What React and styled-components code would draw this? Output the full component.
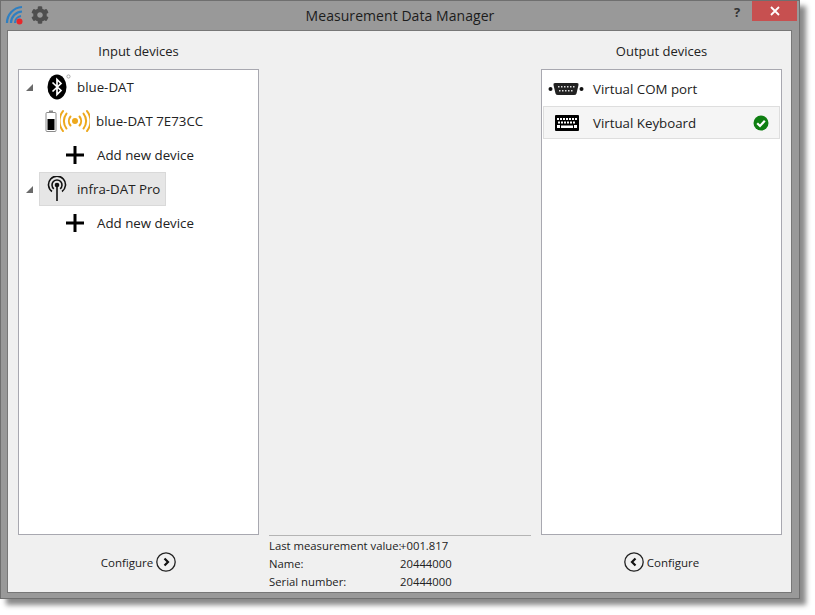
import React from 'react';
import styled, { createGlobalStyle } from 'styled-components';
import { FaCog } from 'react-icons/fa';

const Global = createGlobalStyle`
  html, body { margin: 0; background: #fff; }
  body { font-family: "Open Sans", "Noto Sans", sans-serif; color: #222; }
`;

const Page = styled.div`
  width: 815px;
  height: 615px;
  overflow: hidden;
`;
const Win = styled.div`
  width: 800px;
  height: 599px;
  box-sizing: border-box;
  background: #999999;
  border: 1px solid #6f6f6f;
  box-shadow: 6px 6px 5px #8a8a8a;
  display: flex;
  flex-direction: column;
`;
const TitleBar = styled.div`
  height: 29px;
  flex: none;
  display: grid;
  grid-template-columns: 1fr auto 1fr;
  align-items: start;
`;
const TitleLeft = styled.div`
  display: flex;
  align-items: center;
  gap: 4px;
  padding: 3px 0 0 4px;
  color: #4f4f4f;
`;
const Title = styled.div`
  font-size: 14px;
  line-height: 29px;
  letter-spacing: 0.06px;
  color: #1c1c1c;
`;
const TitleRight = styled.div`
  display: flex;
  justify-content: flex-end;
  padding-right: 2px;
`;
const Help = styled.div`
  width: 30px;
  font-size: 13px;
  font-weight: 700;
  line-height: 22px;
  text-align: center;
  color: #333;
`;
const Close = styled.div`
  width: 45px;
  height: 20px;
  background: #c75050;
  display: flex;
  align-items: center;
  justify-content: center;
`;
const Client = styled.div`
  flex: 1;
  margin: 0 7px 5px 6px;
  box-sizing: border-box;
  background: #f0f0f0;
  border: 1px solid #777;
  padding: 0 9px 0 10px;
  display: grid;
  grid-template-columns: 241px 1fr 241px;
  grid-template-rows: 38px 466px 1fr;
  column-gap: 10px;
`;
const Heading = styled.div`
  font-size: 13px;
  line-height: 40px;
  text-align: center;
  color: #222;
`;
const Panel = styled.div`
  background: #fff;
  border: 1px solid #a8a8b0;
  box-sizing: border-box;
  padding: 0 1px;
`;
const TreeRow = styled.div`
  height: 34px;
  display: flex;
  align-items: center;
  padding-left: ${p => p.$indent}px;
  font-size: 13.3px;
  color: #222;
`;
const Arrow = styled.svg`
  width: 7px;
  height: 7px;
  margin: 0 6px 0 0;
  flex: none;
`;
const Item = styled.div`
  display: flex;
  align-items: center;
  height: 34px;
  box-sizing: border-box;
  padding-right: 5px;
  background: ${p => (p.$selected ? '#e6e6e6' : 'transparent')};
  border: 1px solid ${p => (p.$selected ? '#d9d9d9' : 'transparent')};
`;
const IconSlot = styled.div`
  width: ${p => p.$w}px;
  margin-right: ${p => p.$gap || 0}px;
  flex: none;
  display: flex;
  align-items: center;
  justify-content: center;
`;
const OutRow = styled.div`
  height: ${p => (p.$selected ? '33px' : '34px')};
  display: flex;
  align-items: center;
  box-sizing: border-box;
  font-size: 13.3px;
  color: #222;
  background: ${p => (p.$selected ? '#f5f5f5' : 'transparent')};
  border: 1px solid ${p => (p.$selected ? '#dedede' : 'transparent')};
  padding-right: 10px;
  margin-top: ${p => (p.$selected ? '0' : '2px')};
`;
const OutLabel = styled.span`
  flex: 1;
`;
const ConfigureWrap = styled.div`
  display: flex;
  align-items: center;
  justify-content: center;
  gap: 3px;
  font-size: 11.5px;
  color: #222;
  padding-top: 4px;
  height: 46px;
`;
const Info = styled.div`
  border-top: 1px solid #b4b4b4;
  padding-top: 1px;
  font-size: 11.3px;
  line-height: 18px;
  color: #222;
`;
const InfoRow = styled.div`
  display: grid;
  grid-template-columns: 131px 1fr;
  white-space: nowrap;
`;

const SignalIcon = () => (
  <svg width="22" height="22" viewBox="0 0 22 22">
    <g fill="none" stroke="#2f7fc1" strokeWidth="2.2">
      <path d="M2 19 A16 16 0 0 1 17 3" />
      <path d="M6 19 A11.5 11.5 0 0 1 17 7.5" />
      <path d="M10 19 A7 7 0 0 1 16 12" />
    </g>
    <circle cx="14.5" cy="17.5" r="3" fill="#e8262a" />
  </svg>
);

const BluetoothIcon = () => (
  <svg width="24" height="26" viewBox="0 0 24 26">
    <ellipse cx="10" cy="13" rx="9.5" ry="12.5" fill="#000" />
    <path d="M5.5 8.5 L14 16.5 L10 20.5 V5.5 L14 9.5 L5.5 17.5" fill="none" stroke="#fff" strokeWidth="1.7" />
    <circle cx="21.5" cy="2.5" r="1.6" fill="none" stroke="#999" strokeWidth="0.8" />
  </svg>
);

const BatteryIcon = () => (
  <svg width="12" height="22" viewBox="0 0 12 22">
    <rect x="4" y="0.5" width="4" height="2" fill="#8a8a8a" />
    <rect x="1" y="2.5" width="10" height="19" rx="1" fill="#fff" stroke="#8a8a8a" />
    <rect x="2.5" y="9" width="7" height="11" fill="#000" />
  </svg>
);

const BroadcastIcon = () => (
  <svg width="30" height="24" viewBox="0 0 30 24">
    <circle cx="15" cy="12" r="3" fill="#eda81c" />
    <g fill="none" stroke="#eda81c" strokeWidth="2" strokeLinecap="round">
      <path d="M10.5 7.5 A7 7 0 0 0 10.5 16.5" />
      <path d="M19.5 7.5 A7 7 0 0 1 19.5 16.5" />
      <path d="M6.5 4.5 A12 12 0 0 0 6.5 19.5" />
      <path d="M23.5 4.5 A12 12 0 0 1 23.5 19.5" />
      <path d="M3 2 A16 16 0 0 0 3 22" />
      <path d="M27 2 A16 16 0 0 1 27 22" />
    </g>
  </svg>
);

const PlusIcon = () => (
  <svg width="18" height="18" viewBox="0 0 18 18">
    <path d="M7.5 0 H10.5 V7.5 H18 V10.5 H10.5 V18 H7.5 V10.5 H0 V7.5 H7.5 Z" fill="#000" />
  </svg>
);

const AntennaIcon = () => (
  <svg width="20" height="26" viewBox="0 0 20 26">
    <g fill="none" stroke="#111" strokeWidth="1.6">
      <path d="M5 15.5 A8.5 8.5 0 1 1 15 15.5" />
      <path d="M6.8 12.8 A5 5 0 1 1 13.2 12.8" />
    </g>
    <circle cx="10" cy="9" r="2.3" fill="#111" />
    <rect x="9.2" y="9" width="1.6" height="16" fill="#111" />
  </svg>
);

const SerialIcon = () => (
  <svg width="36" height="14" viewBox="0 0 36 14">
    <circle cx="2.5" cy="7" r="2" fill="#111" />
    <circle cx="33.5" cy="7" r="2" fill="#111" />
    <path d="M7 1 H29 Q31 1 30.5 3 L28.5 11.5 Q28 13 26 13 H10 Q8 13 7.5 11.5 L5.5 3 Q5 1 7 1 Z" fill="#222" />
    <g fill="#ddd">
      {[10, 13, 16, 19, 22, 25].map(x => <rect key={x} x={x} y="4" width="1.5" height="1.5" />)}
      {[11, 14, 17, 20, 23].map(x => <rect key={x} x={x} y="8" width="1.5" height="1.5" />)}
    </g>
  </svg>
);

const KeyboardIcon = () => (
  <svg width="24" height="16" viewBox="0 0 24 16">
    <rect x="0" y="0" width="24" height="16" rx="1" fill="#000" />
    <g fill="#fff">
      {[2, 5, 8, 11, 14, 17, 20].map(x => <rect key={x} x={x} y="3" width="2" height="2" />)}
      {[3, 6, 9, 12, 15, 18].map(x => <rect key={x} x={x} y="6.5" width="2" height="2" />)}
      <rect x="2" y="10" width="3" height="3" />
      <rect x="6" y="10.5" width="12" height="2.5" />
      <rect x="19" y="10" width="3" height="3" />
    </g>
  </svg>
);

const CheckIcon = () => (
  <svg width="16" height="16" viewBox="0 0 16 16">
    <circle cx="8" cy="8" r="7.5" fill="#0f7f12" />
    <path d="M4.2 8.2 L7 11 L11.8 5.8" fill="none" stroke="#fff" strokeWidth="2.2" />
  </svg>
);

const CircleArrow = ({ left }) => (
  <svg width="20" height="20" viewBox="0 0 20 20">
    <circle cx="10" cy="10" r="9.2" fill="none" stroke="#222" strokeWidth="1.3" />
    <path d={left ? 'M11.5 6.5 L8 10 L11.5 13.5' : 'M8.5 6.5 L12 10 L8.5 13.5'} fill="none" stroke="#111" strokeWidth="2.2" />
  </svg>
);

const ExpandArrow = () => (
  <Arrow viewBox="0 0 7 7">
    <polygon points="7,0 7,7 0,7" fill="#6a6a6a" />
  </Arrow>
);

const Configure = ({ left }) => (
  <ConfigureWrap>
    {left && <CircleArrow left />}
    <span>Configure</span>
    {!left && <CircleArrow />}
  </ConfigureWrap>
);

export default function App() {
  return (
    <Page>
      <Global />
      <Win>
        <TitleBar>
          <TitleLeft>
            <SignalIcon />
            <FaCog size={18} />
          </TitleLeft>
          <Title>Measurement Data Manager</Title>
          <TitleRight>
            <Help>?</Help>
            <Close>
              <svg width="10" height="10" viewBox="0 0 10 10">
                <path d="M1 1 L9 9 M9 1 L1 9" stroke="#fff" strokeWidth="1.8" />
              </svg>
            </Close>
          </TitleRight>
        </TitleBar>
        <Client>
          <Heading>Input devices</Heading>
          <div />
          <Heading>Output devices</Heading>

          <Panel>
            <TreeRow $indent={6}>
              <ExpandArrow />
              <Item>
                <IconSlot $w={37}><BluetoothIcon /></IconSlot>
                blue-DAT
              </Item>
            </TreeRow>
            <TreeRow $indent={24}>
              <IconSlot $w={14}><BatteryIcon /></IconSlot>
              <IconSlot $w={33} $gap={5}><BroadcastIcon /></IconSlot>
              blue-DAT 7E73CC
            </TreeRow>
            <TreeRow $indent={46}>
              <IconSlot $w={18} $gap={13}><PlusIcon /></IconSlot>
              Add new device
            </TreeRow>
            <TreeRow $indent={6}>
              <ExpandArrow />
              <Item $selected>
                <IconSlot $w={33} $gap={4}><AntennaIcon /></IconSlot>
                infra-DAT Pro
              </Item>
            </TreeRow>
            <TreeRow $indent={46}>
              <IconSlot $w={18} $gap={13}><PlusIcon /></IconSlot>
              Add new device
            </TreeRow>
          </Panel>
          <div />
          <Panel>
            <OutRow>
              <IconSlot $w={43} $gap={6}><SerialIcon /></IconSlot>
              <OutLabel>Virtual COM port</OutLabel>
            </OutRow>
            <OutRow $selected>
              <IconSlot $w={45} $gap={4}><KeyboardIcon /></IconSlot>
              <OutLabel>Virtual Keyboard</OutLabel>
              <CheckIcon />
            </OutRow>
          </Panel>

          <Configure />
          <Info>
            <InfoRow><span>Last measurement value:</span><span>+001.817</span></InfoRow>
            <InfoRow><span>Name:</span><span>20444000</span></InfoRow>
            <InfoRow><span>Serial number:</span><span>20444000</span></InfoRow>
          </Info>
          <Configure left />
        </Client>
      </Win>
    </Page>
  );
}
